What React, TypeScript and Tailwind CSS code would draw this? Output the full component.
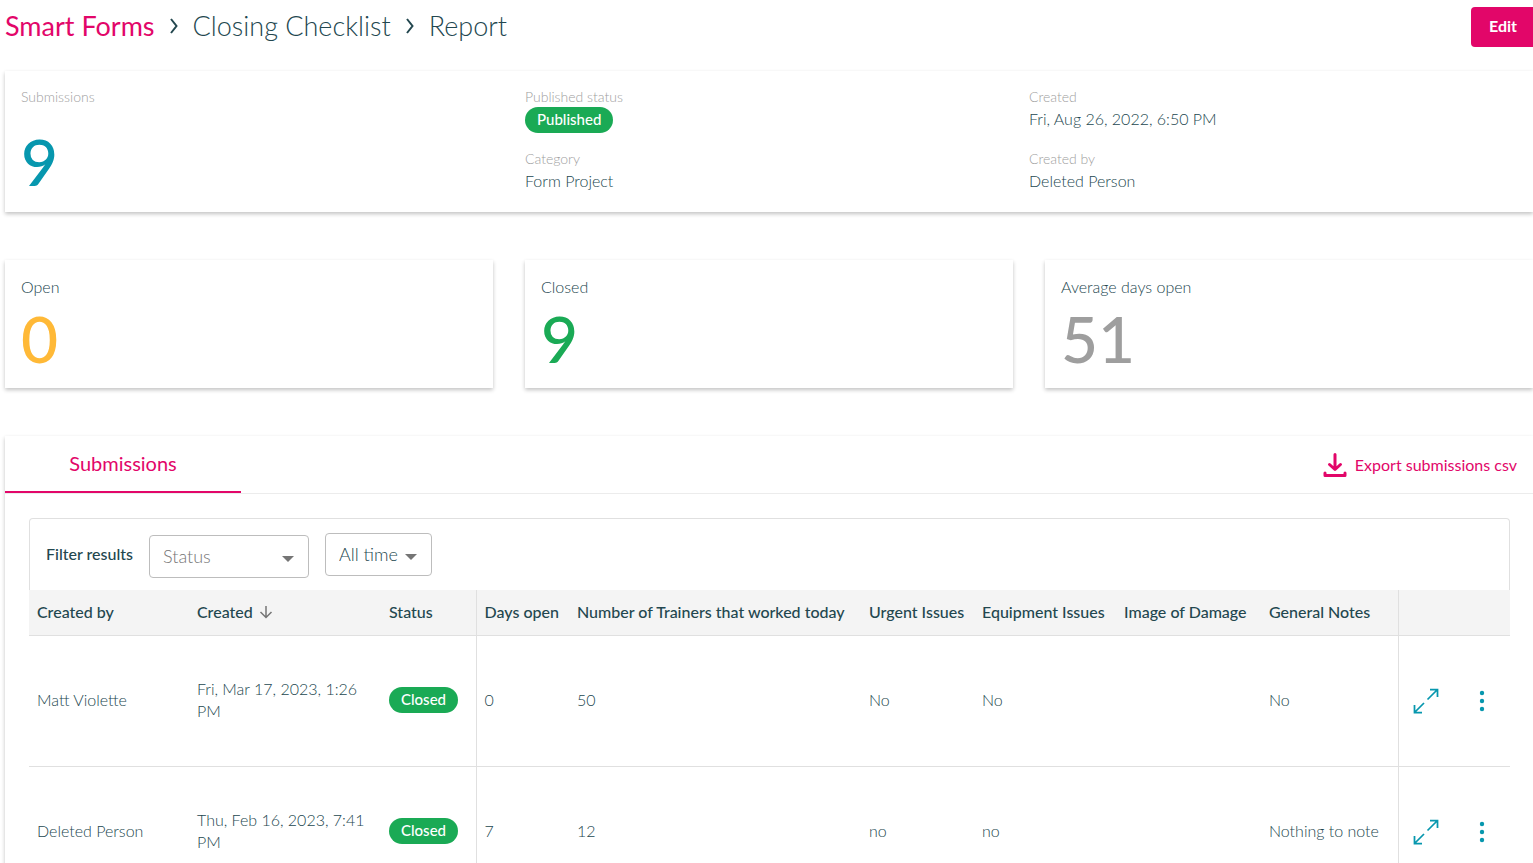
import type { ReactNode } from "react";

type Submission = {
	createdBy: string;
	created: string;
	status: string;
	daysOpen: number;
	trainers: number;
	urgent: string;
	equipment: string;
	damage: string;
	notes: string;
};

const submissions: Submission[] = [
	{
		createdBy: "Matt Violette",
		created: "Fri, Mar 17, 2023, 1:26 PM",
		status: "Closed",
		daysOpen: 0,
		trainers: 50,
		urgent: "No",
		equipment: "No",
		damage: "",
		notes: "No",
	},
	{
		createdBy: "Deleted Person",
		created: "Thu, Feb 16, 2023, 7:41 PM",
		status: "Closed",
		daysOpen: 7,
		trainers: 12,
		urgent: "no",
		equipment: "no",
		damage: "",
		notes: "Nothing to note",
	},
];

export default function App() {
	return (
		<main className="h-screen overflow-hidden bg-white pl-[5px] font-['Lato',sans-serif] text-base font-light text-[#23474f]">
			<Header />
			<Summary />
			<section className="mt-12 grid grid-cols-3 gap-8">
				<Stat label="Open" value="0" color="text-[#ffb937]" />
				<Stat label="Closed" value="9" color="text-[#1aaa55]" />
				<Stat label="Average days open" value="51" color="text-[#9e9e9e]" />
			</section>
			<Submissions />
		</main>
	);
}

const Header = () => (
	<header className="flex items-start justify-between pt-[7px]">
		<nav aria-label="Breadcrumb" className="flex items-center text-[27px] leading-[38px]">
			<a href="#forms" className="font-normal text-[#e20669]">
				Smart Forms
			</a>
			<Chevron />
			<a href="#checklist">Closing Checklist</a>
			<Chevron />
			<span>Report</span>
		</nav>
		<button className="h-10 rounded-l bg-[#e20669] pr-4 pb-[2px] pl-[18px] font-bold text-white">
			Edit
		</button>
	</header>
);

const Chevron = () => (
	<svg viewBox="0 0 10 16" className="mx-[14px] h-4 w-[10px]" fill="none" stroke="currentColor" strokeWidth="2">
		<path d="M2 1 L7.500 8 L2 15" />
	</svg>
);

const Card = (props: { className?: string; children: ReactNode }) => (
	<div className={`bg-white shadow-[0_2px_4px_rgba(0,0,0,0.24)] ${props.className ?? ""}`}>
		{props.children}
	</div>
);

const Summary = () => (
	<Card className="mt-6 grid h-[141px] grid-cols-3 pt-4 pl-4">
		<dl>
			<Label>Submissions</Label>
			<dd className="mt-5 text-[64px] leading-[70px] font-medium text-[#0797ae]">9</dd>
		</dl>
		<dl>
			<Label>Published status</Label>
			<dd className="h-[26px]">
				<Badge>Published</Badge>
			</dd>
			<Label className="mt-4">Category</Label>
			<dd className="leading-6">Form Project</dd>
		</dl>
		<dl>
			<Label>Created</Label>
			<dd className="h-[26px] leading-6">Fri, Aug 26, 2022, 6:50 PM</dd>
			<Label className="mt-4">Created by</Label>
			<dd className="leading-6">Deleted Person</dd>
		</dl>
	</Card>
);

const Label = (props: { className?: string; children: ReactNode }) => (
	<dt className={`text-sm leading-5 text-[#a0a0a0] ${props.className ?? ""}`}>
		{props.children}
	</dt>
);

const Badge = (props: { children: ReactNode }) => (
	<span className="inline-block h-[26px] rounded-full bg-[#1aaa55] px-3 text-[15px] leading-[25px] font-medium text-white">
		{props.children}
	</span>
);

const Stat = (props: { label: string; value: string; color: string }) => (
	<Card className="h-32 px-4 pt-[15px]">
		<p className="leading-6">{props.label}</p>
		<p className={`mt-1 text-[64px] leading-[72px] font-medium ${props.color}`}>{props.value}</p>
	</Card>
);

const Submissions = () => (
	<Card className="mt-12">
		<div className="flex h-[58px] items-stretch justify-between border-b border-[#ececec] font-normal text-[#e20669]">
			<button className="w-[236px] border-b-2 border-[#e20669] pb-[2px] text-xl">Submissions</button>
			<a href="#export" className="flex items-center gap-2 pr-4">
				<svg
					viewBox="0 0 24 24"
					className="size-6"
					fill="none"
					stroke="currentColor"
					strokeWidth="3"
					strokeLinecap="round"
					strokeLinejoin="round"
				>
					<path d="M12 1.500V16M6.500 11.500 12 16.500l5.500-5" />
					<path d="M2 20v2.500h20V20" />
				</svg>
				Export submissions csv
			</a>
		</div>
		<div className="pt-6 pr-[23px] pl-6">
			<Filters />
			<SubmissionTable />
		</div>
	</Card>
);

const Filters = () => (
	<div className="flex h-[72px] items-center gap-4 rounded-t border border-b-0 border-[#e0e0e0] px-4">
		<span className="pb-[2px] font-medium">Filter results</span>
		<div className="relative mt-1 w-40">
			<select
				aria-label="Status"
				className="h-[43px] w-full appearance-none rounded border border-[#bdbdbd] pb-[2px] pl-[13px] text-lg text-[#757575]"
			>
				<option>Status</option>
			</select>
			<Caret />
		</div>
		<div className="relative w-[107px]">
			<select
				aria-label="Date range"
				className="h-[43px] w-full appearance-none rounded border border-[#bdbdbd] pb-[2px] pl-[13px] text-lg"
			>
				<option>All time</option>
			</select>
			<Caret />
		</div>
	</div>
);

const Caret = () => (
	<svg
		viewBox="0 0 12 6"
		className="pointer-events-none absolute top-[21px] right-[15px] h-[6px] w-3 fill-[#757575]"
	>
		<path d="M0 0h12L6 6z" />
	</svg>
);

const SubmissionTable = () => (
	<table className="w-full table-fixed text-left">
		<colgroup>
			<col className="w-40" />
			<col className="w-48" />
			<col className="w-[95px]" />
			<col className="w-[93px]" />
			<col />
			<col className="w-[113px]" />
			<col className="w-[142px]" />
			<col className="w-[145px]" />
			<col className="w-[137px]" />
			<col className="w-28" />
		</colgroup>
		<thead>
			<tr className="h-[45px] border-b border-[#e0e0e0] bg-[#f4f4f4] whitespace-nowrap *:px-2 *:font-medium">
				<th>Created by</th>
				<th>
					<button className="flex items-center gap-[6px]">
						Created
						<svg viewBox="0 0 14 14" className="size-[14px]" fill="none" stroke="#757575" strokeWidth="1.5">
							<path d="M7 1v11.500M1.500 7 7 12.500 12.500 7" />
						</svg>
					</button>
				</th>
				<th className="border-r border-[#e0e0e0]">Status</th>
				<th>Days open</th>
				<th>Number of Trainers that worked today</th>
				<th>Urgent Issues</th>
				<th>Equipment Issues</th>
				<th>Image of Damage</th>
				<th className="border-r border-[#e0e0e0]">General Notes</th>
				<th aria-label="Actions" />
			</tr>
		</thead>
		<tbody>
			{submissions.map((s) => (
				<tr key={s.created} className="h-[131px] border-b border-[#e0e0e0] *:px-2 *:pb-[2px]">
					<td>{s.createdBy}</td>
					<td className="leading-[22px]">{s.created}</td>
					<td className="border-r border-[#e0e0e0]">
						<Badge>{s.status}</Badge>
					</td>
					<td>{s.daysOpen}</td>
					<td>{s.trainers}</td>
					<td>{s.urgent}</td>
					<td>{s.equipment}</td>
					<td>{s.damage}</td>
					<td className="border-r border-[#e0e0e0]">{s.notes}</td>
					<td>
						<RowActions />
					</td>
				</tr>
			))}
		</tbody>
	</table>
);

const RowActions = () => (
	<div className="flex items-center justify-between pt-[2px] pr-3 pl-[6px] text-[#0797ae]">
		<button aria-label="Expand">
			<svg viewBox="0 0 26 26" className="size-[26px]" fill="none" stroke="currentColor" strokeWidth="1.75">
				<path d="M14.500 11.500 24.500 1.500M17 1.500h7.500V9" />
				<path d="M11 15 1.500 24.500M1.500 17v7.500H9" />
			</svg>
		</button>
		<button aria-label="More">
			<svg viewBox="0 0 16 24" className="h-6 w-4" fill="currentColor">
				<circle cx="8" cy="4" r="2.200" />
				<circle cx="8" cy="12" r="2.200" />
				<circle cx="8" cy="20" r="2.200" />
			</svg>
		</button>
	</div>
);
